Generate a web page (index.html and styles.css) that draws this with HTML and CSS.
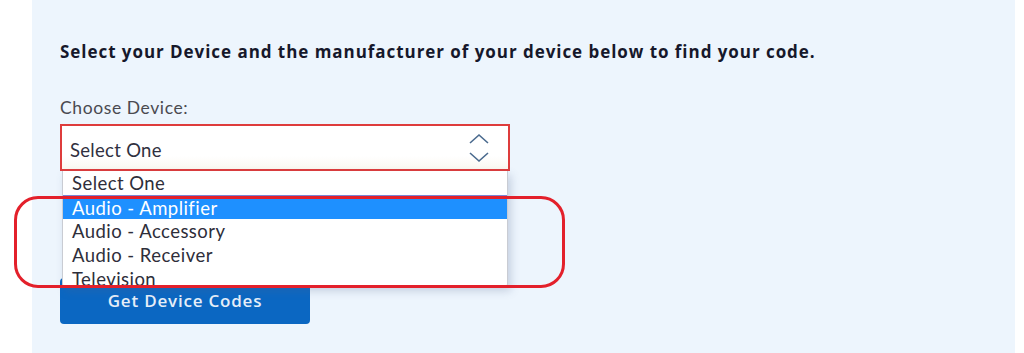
FILE: index.html
```html
<!DOCTYPE html>
<html>
<head>
<meta charset="utf-8">
<link rel="stylesheet" href="styles.css">
</head>
<body>
<div class="panel">
  <p class="intro">Select your Device and the manufacturer of your device below to find your code.</p>
  <div class="field">
    <label class="label">Choose Device:</label>
    <div class="select-wrap">
      <div class="select">
        <span class="select-value">Select One</span>
        <svg class="chev" width="22" height="30" viewBox="0 0 22 30">
          <path d="M2 10 L11 2 L20 10" fill="none" stroke="#4a6a8e" stroke-width="1.6"/>
          <path d="M2 20 L11 28 L20 20" fill="none" stroke="#4a6a8e" stroke-width="1.6"/>
        </svg>
      </div>
      <ul class="options">
        <li class="opt">Select One</li>
        <li class="opt active">Audio - Amplifier</li>
        <li class="opt">Audio - Accessory</li>
        <li class="opt">Audio - Receiver</li>
        <li class="opt">Television</li>
      </ul>
      <div class="annot"></div>
    </div>
  </div>
  <button class="btn">Get Device Codes</button>
</div>
</body>
</html>
```
FILE: styles.css
```css
html, body {
  margin: 0;
  padding: 0;
  background: #ffffff;
  height: 353px;
  overflow: hidden;
}
.panel {
  margin-left: 32px;
  width: 983px;
  height: 353px;
  background: #edf5fd;
  padding: 41px 0 0 28px;
  box-sizing: border-box;
  font-family: "Lato", "Open Sans", sans-serif;
}
.intro {
  margin: 0;
  font-family: "Open Sans", sans-serif;
  font-weight: 700;
  font-size: 17px;
  line-height: 22px;
  color: #16182b;
  letter-spacing: 0.95px;
  white-space: nowrap;
}
.field {
  margin-top: 35px;
}
.label {
  display: block;
  font-size: 17.5px;
  line-height: 20px;
  color: #4a4a50;
  margin-bottom: 6px;
  letter-spacing: 0.6px;
}
.select-wrap {
  position: relative;
  width: 450px;
}
.select {
  box-sizing: border-box;
  height: 47px;
  border: 2px solid #de3c3c;
  background: linear-gradient(#ffffff 70%, #faf8f0);
  display: flex;
  align-items: center;
  justify-content: space-between;
  padding: 0 18px 0 8px;
}
.select-value {
  font-size: 18.5px;
  color: #303040;
  margin-top: 4px;
  letter-spacing: 0.3px;
}
.chev {
  display: block;
}
.options {
  position: absolute;
  left: 2px;
  top: 47px;
  width: 446px;
  height: 116px;
  overflow: hidden;
  margin: 0;
  padding: 0;
  list-style: none;
  background: #ffffff;
  border: 1px solid #c9ccd3;
  border-top: none;
  border-radius: 0 0 3px 3px;
  box-shadow: 3px 4px 8px rgba(80, 100, 140, 0.25);
  box-sizing: border-box;
  z-index: 2;
}
.opt {
  height: 24px;
  line-height: 24px;
  padding-left: 9px;
  font-size: 18.5px;
  color: #2e2e3a;
  letter-spacing: 0.45px;
}
.opt.active {
  background: #1e90ff;
  color: #ffffff;
  border-top: 1px solid #7a86d6;
  box-sizing: border-box;
}
.annot {
  position: absolute;
  left: -46px;
  top: 72px;
  width: 551px;
  height: 92px;
  border: 3px solid #e3202b;
  border-radius: 24px;
  box-sizing: border-box;
  z-index: 3;
}
.btn {
  display: block;
  margin-top: 107px;
  width: 250px;
  height: 46px;
  border: none;
  border-radius: 4px;
  background: #0b67c2;
  color: #e6eef8;
  font-family: "Open Sans", sans-serif;
  font-weight: 600;
  font-size: 17px;
  letter-spacing: 0.8px;
  padding-top: 0;
}
```
